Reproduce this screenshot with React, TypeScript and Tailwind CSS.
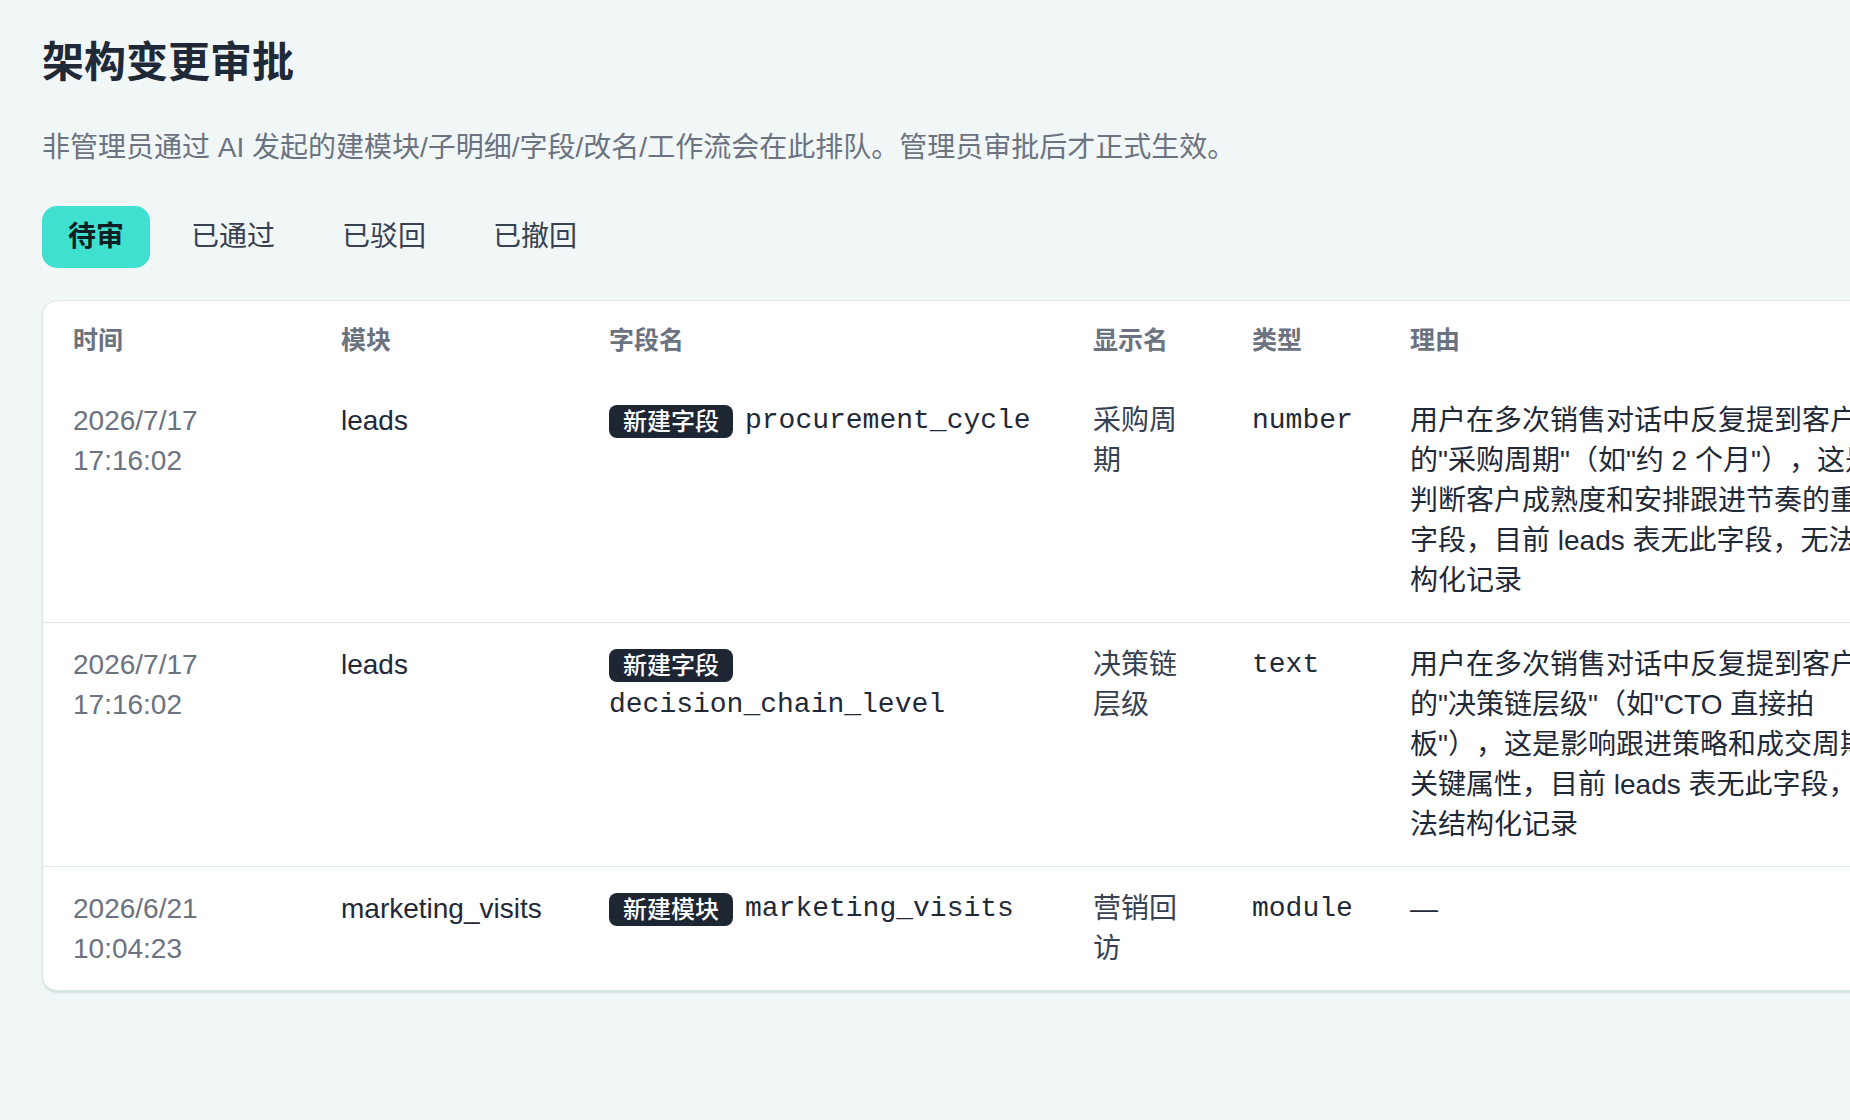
const sans = '"Liberation Sans", "Noto Sans CJK SC", sans-serif';
const mono = '"Liberation Mono", "Noto Sans CJK SC", monospace';

type Row = {
  date: string;
  time: string;
  module: string;
  kind: string;
  field: string;
  label: string;
  type: string;
  reason: string;
};

const rows: Row[] = [
  {
    date: "2026/7/17",
    time: "17:16:02",
    module: "leads",
    kind: "新建字段",
    field: "procurement_cycle",
    label: "采购周期",
    type: "number",
    reason:
      '用户在多次销售对话中反复提到客户的"采购周期"（如"约 2 个月"），这是判断客户成熟度和安排跟进节奏的重要字段，目前 leads 表无此字段，无法结构化记录',
  },
  {
    date: "2026/7/17",
    time: "17:16:02",
    module: "leads",
    kind: "新建字段",
    field: "decision_chain_level",
    label: "决策链层级",
    type: "text",
    reason:
      '用户在多次销售对话中反复提到客户的"决策链层级"（如"CTO 直接拍板"），这是影响跟进策略和成交周期的关键属性，目前 leads 表无此字段，无法结构化记录',
  },
  {
    date: "2026/6/21",
    time: "10:04:23",
    module: "marketing_visits",
    kind: "新建模块",
    field: "marketing_visits",
    label: "营销回访",
    type: "module",
    reason: "—",
  },
];

const tabs = ["待审", "已通过", "已驳回", "已撤回"];
const headers = ["时间", "模块", "字段名", "显示名", "类型", "理由", "操作"];

export default function App() {
  return (
    <div
      className="min-h-screen w-full overflow-hidden bg-[#f1f7f7] pl-[42px] pt-[38px] [text-spacing-trim:space-all]"
      style={{ fontFamily: sans }}
    >
      <h1 className="text-[42px] leading-[50px] font-bold text-[#1f2937]">
        架构变更审批
      </h1>
      <p className="mt-[40px] text-[28px] leading-[40px] text-[#6b7280]">
        非管理员通过 AI 发起的建模块/子明细/字段/改名/工作流会在此排队。管理员审批后才正式生效。
      </p>

      <div className="mt-[38px] flex gap-[15px]">
        {tabs.map((t, i) => (
          <button
            key={t}
            className={
              i === 0
                ? "h-[62px] rounded-[15px] bg-[#40e0d0] px-[26px] text-[28px] font-bold text-[#0f1f24]"
                : "h-[62px] rounded-[15px] px-[26px] text-[28px] text-[#374151]"
            }
          >
            {t}
          </button>
        ))}
      </div>

      <div className="mt-[32px] w-max rounded-[15px] border border-[#dbe8e6] bg-white shadow-[0_2px_2px_rgba(150,190,185,0.35)]">
        <table className="w-[2105px] table-fixed border-collapse text-left">
          <colgroup>
            <col className="w-[268px]" />
            <col className="w-[268px]" />
            <col className="w-[484px]" />
            <col className="w-[159px]" />
            <col className="w-[158px]" />
            <col className="w-[548px]" />
            <col className="w-[220px]" />
          </colgroup>
          <thead>
            <tr>
              {headers.map((h) => (
                <th
                  key={h}
                  className="px-[30px] py-[21px] text-[25px] leading-[36px] font-semibold text-[#6b7280]"
                >
                  {h}
                </th>
              ))}
            </tr>
          </thead>
          <tbody className="text-[28px] leading-[40px]">
            {rows.map((r, i) => (
              <tr
                key={i}
                className={i > 0 ? "border-t border-[#dbe8e6] align-top" : "align-top"}
              >
                <td className="px-[30px] pt-[22px] pb-[21px] text-[#6b7280]">
                  {r.date} {r.time}
                </td>
                <td className="px-[30px] pt-[22px] pb-[21px] text-[#1f2937]">{r.module}</td>
                <td className="px-[30px] pt-[22px] pb-[21px]">
                  <div className="flex flex-wrap items-center gap-x-[12px]">
                    <span className="flex h-[40px] items-center">
                      <span className="rounded-[8px] bg-[#1f2633] px-[14px] text-[24px] leading-[33px] font-medium text-white">
                        {r.kind}
                      </span>
                    </span>
                    <span className="text-[#1f2937]" style={{ fontFamily: mono }}>
                      {r.field}
                    </span>
                  </div>
                </td>
                <td className="px-[30px] pt-[22px] pb-[21px] text-[#374151]">{r.label}</td>
                <td
                  className="whitespace-nowrap px-[30px] pt-[22px] pb-[21px] text-[#1f2937]"
                  style={{ fontFamily: mono }}
                >
                  {r.type}
                </td>
                <td className="px-[30px] pt-[22px] pb-[21px] text-[#1f2937]">{r.reason}</td>
                <td className="px-[30px] pt-[22px] pb-[21px]">
                  <div className="flex gap-3">
                    <button className="rounded-[10px] bg-[#40e0d0] px-4 text-[24px] leading-[40px] font-semibold text-[#0f1f24]">
                      通过
                    </button>
                    <button className="rounded-[10px] border border-[#dbe8e6] px-4 text-[24px] leading-[38px] text-[#374151]">
                      驳回
                    </button>
                  </div>
                </td>
              </tr>
            ))}
          </tbody>
        </table>
      </div>
    </div>
  );
}
